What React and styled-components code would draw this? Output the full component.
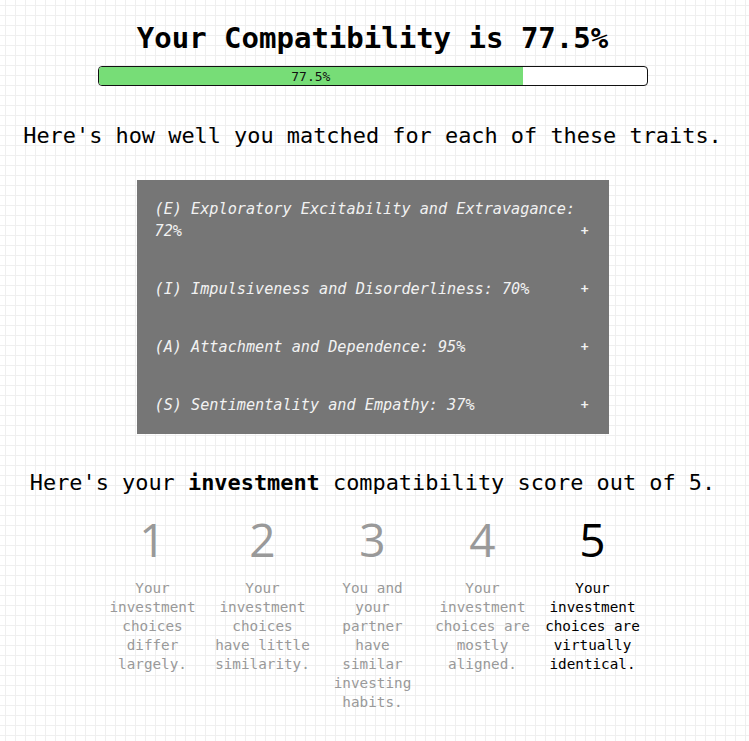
import React from "react";
import styled, { createGlobalStyle } from "styled-components";

const Global = createGlobalStyle`
  html, body {
    margin: 0;
    padding: 0;
  }
  body {
    background-color: #ffffff;
    background-image:
      linear-gradient(to right, #efefef 1px, transparent 1px),
      linear-gradient(to bottom, #efefef 1px, transparent 1px);
    background-size: 10px 10px;
    background-position: 5px 5px;
    font-family: "DejaVu Sans Mono", "Liberation Mono", monospace;
    color: #000;
  }
`;

const Page = styled.main`
  display: flex;
  flex-direction: column;
  align-items: center;
  padding: 20px 4px 0 0;
  min-height: 741px;
  box-sizing: border-box;
`;

const Title = styled.h1`
  margin: 0;
  font-size: 29px;
  line-height: 36px;
  font-weight: bold;
`;

const Bar = styled.div`
  margin-top: 10px;
  width: 550px;
  height: 20px;
  box-sizing: border-box;
  border: 1px solid #111;
  border-radius: 4px;
  background: #fff;
  overflow: hidden;
  display: flex;
`;

const Fill = styled.div`
  background: #77dd77;
  height: 100%;
  display: flex;
  align-items: center;
  justify-content: center;
  font-size: 13px;
  color: #111;
`;

const Heading = styled.h2`
  margin: ${(p) => p.$mt}px 0 0;
  font-size: ${(p) => p.$size}px;
  line-height: 28px;
  font-weight: normal;
  b {
    font-weight: bold;
  }
`;

const Traits = styled.ul`
  list-style: none;
  margin: 30px 0 0;
  padding: 0;
  width: 472px;
  background: #767676;
`;

const Trait = styled.li`
  display: flex;
  align-items: flex-end;
  justify-content: space-between;
  gap: 4px;
  padding: 18px 20px 18px 18px;
  color: #f2f2f2;
  font-style: italic;
  font-size: 15.2px;
  line-height: 22px;
`;

const TraitLabel = styled.span`
  flex: 1;
`;

const Plus = styled.span`
  font-style: normal;
  font-weight: bold;
  font-size: 13px;
  line-height: 22px;
`;

const Scores = styled.div`
  margin-top: 14px;
  display: grid;
  grid-template-columns: repeat(5, 100px);
  column-gap: 10px;
`;

const Score = styled.div`
  display: flex;
  flex-direction: column;
  align-items: center;
  text-align: center;
  color: ${(p) => (p.$active ? "#000" : "#999")};
`;

const Num = styled.div`
  font-family: "Open Sans", "Noto Sans", sans-serif;
  font-size: 46px;
  line-height: 56px;
`;

const Desc = styled.p`
  margin: 12px 0 0;
  font-size: 14.3px;
  line-height: 19px;
`;

const traits = [
  "(E) Exploratory Excitability and Extravagance: 72%",
  "(I) Impulsiveness and Disorderliness: 70%",
  "(A) Attachment and Dependence: 95%",
  "(S) Sentimentality and Empathy: 37%",
];

const scores = [
  "Your investment choices differ largely.",
  "Your investment choices have little similarity.",
  "You and your partner have similar investing habits.",
  "Your investment choices are mostly aligned.",
  "Your investment choices are virtually identical.",
];

export default function App() {
  const pct = 77.5;
  return (
    <>
      <Global />
      <Page>
        <Title>Your Compatibility is {pct}%</Title>
        <Bar>
          <Fill style={{ width: `${pct}%` }}>{pct}%</Fill>
        </Bar>
        <Heading $mt={36} $size={21.9}>
          Here's how well you matched for each of these traits.
        </Heading>
        <Traits>
          {traits.map((t) => (
            <Trait key={t}>
              <TraitLabel>{t}</TraitLabel>
              <Plus>+</Plus>
            </Trait>
          ))}
        </Traits>
        <Heading $mt={35} $size={21.9}>
          Here's your <b>investment</b> compatibility score out of 5.
        </Heading>
        <Scores>
          {scores.map((s, i) => (
            <Score key={i} $active={i === 4}>
              <Num>{i + 1}</Num>
              <Desc>{s}</Desc>
            </Score>
          ))}
        </Scores>
      </Page>
    </>
  );
}
